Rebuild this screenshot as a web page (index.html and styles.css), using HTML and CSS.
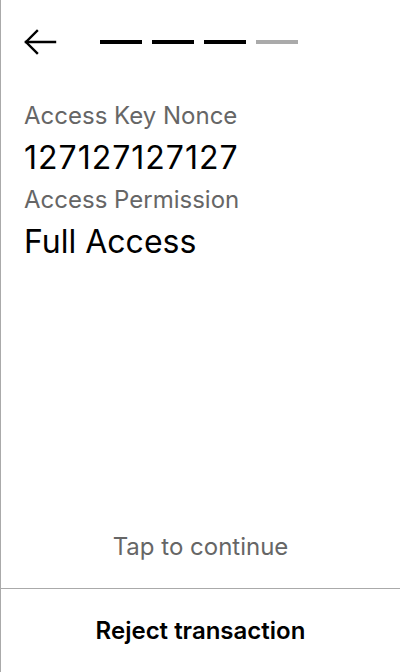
FILE: index.html
```html
<!DOCTYPE html>
<html>
<head>
<meta charset="utf-8">
<link rel="stylesheet" href="styles.css">
</head>
<body>
<div class="screen">
  <header class="top">
    <button class="back" aria-label="Back">
      <svg width="34" height="28" viewBox="0 0 34 28" fill="none" stroke="#000" stroke-width="2.4" stroke-linecap="square">
        <path d="M2 13H31"/>
        <path d="M13 2L2 13L13 24"/>
      </svg>
    </button>
    <div class="steps">
      <span class="step done"></span>
      <span class="step done"></span>
      <span class="step done"></span>
      <span class="step"></span>
    </div>
  </header>
  <main class="content">
    <div class="label">Access Key Nonce</div>
    <div class="value numeric">127127127127</div>
    <div class="label">Access Permission</div>
    <div class="value">Full Access</div>
  </main>
  <div class="tap">Tap to continue</div>
  <footer class="footer">
    <button class="reject">Reject transaction</button>
  </footer>
</div>
</body>
</html>
```
FILE: styles.css
```css
* { box-sizing: border-box; }
html, body { margin: 0; padding: 0; background: #fff; }
body { font-family: Inter, "Noto Sans", sans-serif; color: #000; }
.screen {
  width: 400px;
  height: 672px;
  border-left: 1px solid #aaa;
  display: flex;
  flex-direction: column;
}
.top {
  display: flex;
  align-items: flex-start;
  padding: 29px 0 0 23px;
  height: 84px;
}
.back {
  border: 0;
  background: none;
  padding: 0;
  margin: 0;
  width: 34px;
  height: 28px;
  display: block;
}
.back svg { display: block; }
.steps {
  display: flex;
  gap: 10px;
  margin-left: 42px;
  margin-top: 11px;
}
.step {
  width: 42px;
  height: 4px;
  background: #aaa;
}
.step.done { background: #000; }
.content {
  padding: 14px 0 0 23px;
  flex: 1;
}
.label {
  font-size: 24px;
  color: #666;
  line-height: 36px;
}
.value {
  font-size: 32px;
  line-height: 48px;
}
.value.numeric { letter-spacing: 1px; }
.tap {
  text-align: center;
  font-size: 24px;
  color: #666;
  line-height: 28px;
  padding-bottom: 27px;
}
.footer {
  border-top: 1px solid #aaa;
  height: 84px;
  display: flex;
  align-items: center;
  justify-content: center;
}
.reject {
  border: 0;
  background: none;
  font-family: Inter, "Noto Sans", sans-serif;
  font-size: 24px;
  font-weight: 600;
  color: #000;
  padding: 0;
}
```
